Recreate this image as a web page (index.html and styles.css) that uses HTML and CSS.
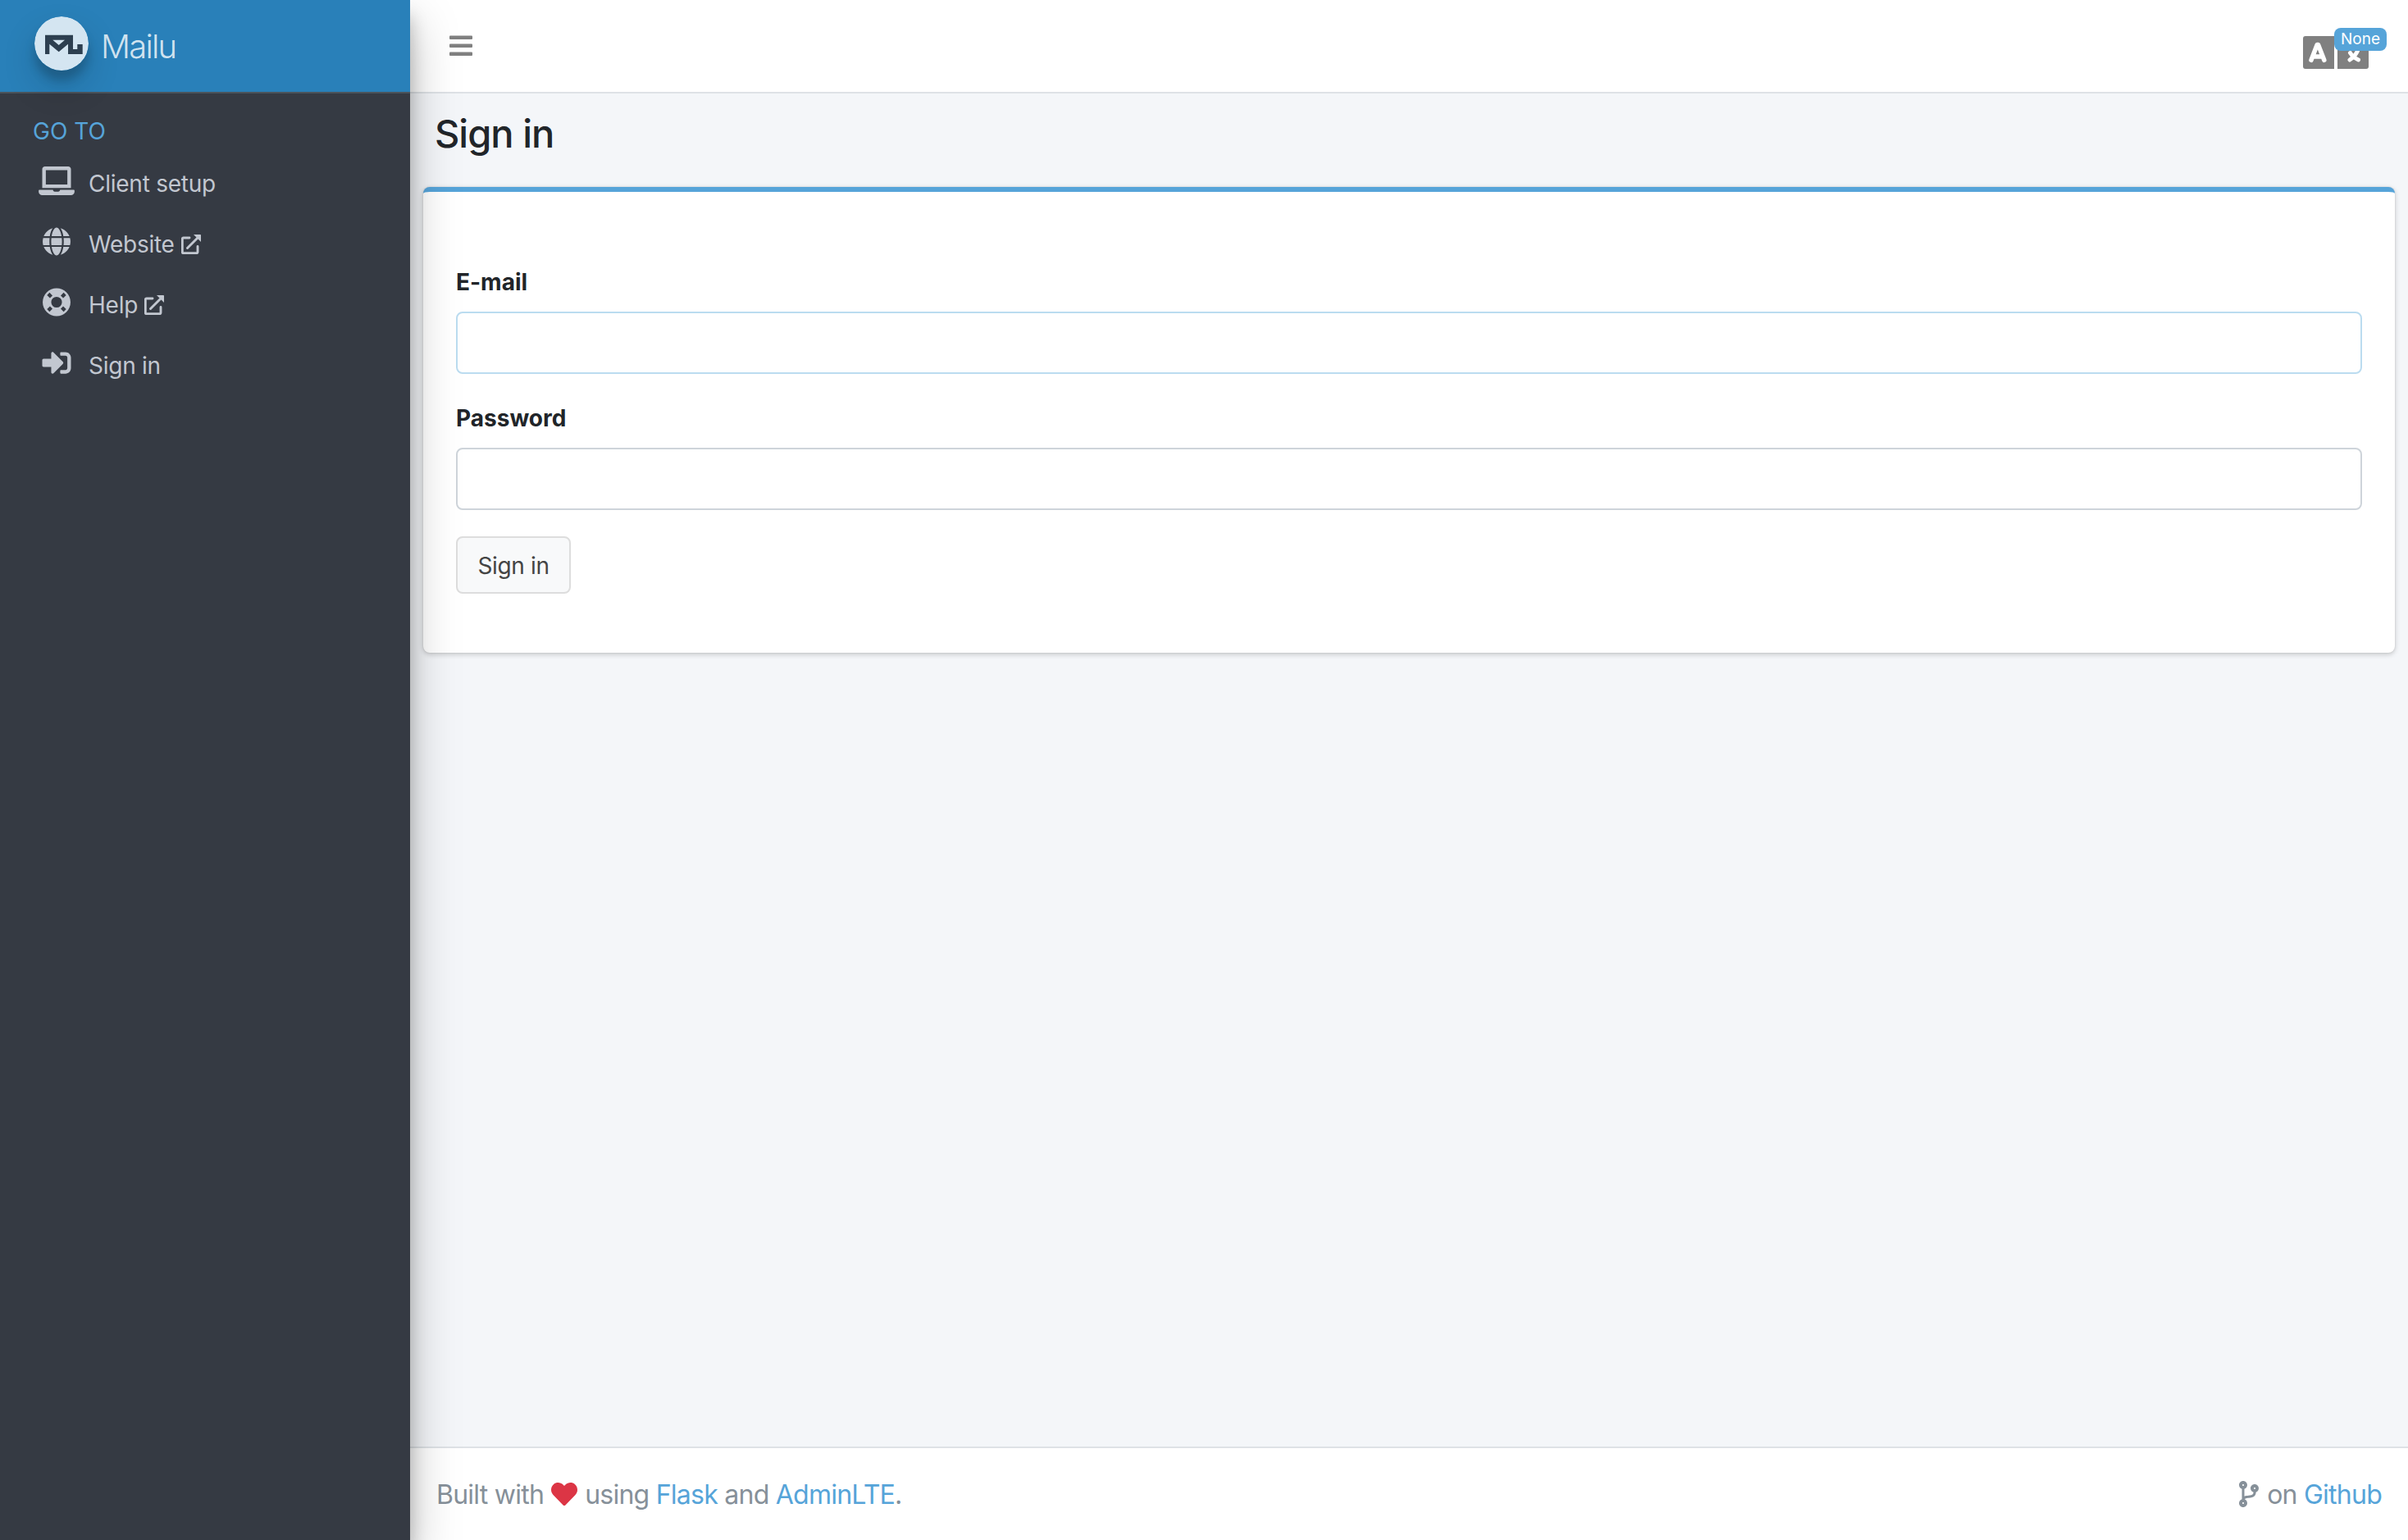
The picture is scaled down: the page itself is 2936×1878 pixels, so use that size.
FILE: index.html
```html
<!DOCTYPE html>
<html lang="en">
<head>
<meta charset="utf-8">
<title>Mailu</title>
<link rel="stylesheet" href="styles.css">
</head>
<body>
<div class="wrapper">
  <aside class="sidebar">
    <a class="brand">
      <svg class="brand-logo" viewBox="0 0 66 66"><circle cx="33" cy="33" r="33" fill="#fff"/><path fill="#2f3036" fill-rule="evenodd" d="M13 22.700H47V40H52.300V34H58.700V46H41V33.700L29.700 43.300 18.300 33.700V46H13zM22.300 28.700 29.700 35 37 28.700z"/></svg>
      <span class="brand-text">Mailu</span>
    </a>
    <nav class="nav">
      <div class="nav-header">GO TO</div>
      <a class="nav-item"><svg class="nav-icon laptop" viewBox="0 0 640 512"><path d="M624 416H381.540c-.740 19.810-14.710 32-32.740 32H288c-18.690 0-33.020-17.470-32.770-32H16c-8.800 0-16 7.200-16 16v16c0 35.200 28.800 64 64 64h512c35.200 0 64-28.800 64-64v-16c0-8.800-7.200-16-16-16zM576 48c0-26.400-21.600-48-48-48H112C85.600 0 64 21.600 64 48v336h512V48zm-64 272H128V64h384v256z"/></svg><span>Client setup</span></a>
      <a class="nav-item"><svg class="nav-icon" viewBox="0 0 496 512"><path d="M336.500 160C322 70.700 287.800 8 248 8s-74 62.700-88.500 152h177zM152 256c0 22.200 1.200 43.500 3.300 64h185.300c2.100-20.500 3.300-41.800 3.300-64s-1.200-43.500-3.300-64H155.300c-2.100 20.500-3.300 41.800-3.300 64zm324.700-96c-28.600-67.900-86.500-120.400-158-141.600 24.400 33.800 41.200 84.700 50 141.600h108zM177.200 18.400C105.800 39.600 47.800 92.100 19.300 160h108c8.700-56.900 25.500-107.800 49.900-141.600zM487.400 192H372.700c2.100 21 3.300 42.500 3.300 64s-1.200 43-3.300 64h114.600c5.500-20.500 8.600-41.800 8.600-64s-3.100-43.500-8.500-64zM120 256c0-21.500 1.200-43 3.300-64H8.600C3.200 212.500 0 233.800 0 256s3.200 43.500 8.600 64h114.600c-2-21-3.200-42.500-3.200-64zm39.500 96c14.500 89.300 48.700 152 88.500 152s74-62.700 88.500-152h-177zm159.300 141.600c71.400-21.200 129.400-73.700 158-141.600h-108c-8.800 56.900-25.600 107.800-50 141.600zM19.300 352c28.600 67.900 86.500 120.400 158 141.600-24.400-33.800-41.200-84.700-50-141.600h-108z"/></svg><span>Website</span><svg class="ext" viewBox="0 0 24 24"><path d="M10 4H2.700Q1.300 4 1.300 5.400V21.300Q1.300 22.700 2.700 22.700H18.600Q20 22.700 20 21.300V14.500M7.500 16.500 20 4" fill="none" stroke="currentColor" stroke-width="2.900" stroke-linecap="round"/><path d="M15 0h8.200q.8 0 .8.800V9z"/></svg></a>
      <a class="nav-item"><svg class="nav-icon" viewBox="0 0 512 512"><path fill-rule="evenodd" d="M256 8a248 248 0 1 0 0 496 248 248 0 0 0 0-496zm0 152a96 96 0 1 1 0 192 96 96 0 0 1 0-192zM85 130l45-45 53 53-45 45zM382 85l45 45-53 53-45-45zM427 382l-45 45-53-53 45-45zM130 427l-45-45 53-53 45 45z"/></svg><span>Help</span><svg class="ext" viewBox="0 0 24 24"><path d="M10 4H2.700Q1.300 4 1.300 5.400V21.300Q1.300 22.700 2.700 22.700H18.600Q20 22.700 20 21.300V14.500M7.500 16.500 20 4" fill="none" stroke="currentColor" stroke-width="2.900" stroke-linecap="round"/><path d="M15 0h8.200q.8 0 .8.800V9z"/></svg></a>
      <a class="nav-item"><svg class="nav-icon" viewBox="0 0 512 512"><path d="M416 448h-84c-6.600 0-12-5.400-12-12v-40c0-6.600 5.400-12 12-12h84c17.700 0 32-14.300 32-32V160c0-17.700-14.300-32-32-32h-84c-6.600 0-12-5.400-12-12V76c0-6.600 5.400-12 12-12h84c53 0 96 43 96 96v192c0 53-43 96-96 96zm-47-209L201 71c-15-15-41-4.500-41 17v96H24c-13.300 0-24 10.700-24 24v96c0 13.300 10.700 24 24 24h136v96c0 21.500 26 32 41 17l168-168c9.300-9.400 9.300-24.600 0-34z"/></svg><span>Sign in</span></a>
    </nav>
  </aside>
  <div class="main">
    <header class="topbar">
      <svg class="menu" viewBox="0 0 28 26"><rect y=".5" width="28" height="4.500" rx="1"/><rect y="10.500" width="28" height="4.500" rx="1"/><rect y="20.500" width="28" height="4.500" rx="1"/></svg>
      <div class="lang">
        <svg viewBox="0 0 80 40"><path d="M3 0H38V40H3Q0 40 0 37V3Q0 0 3 0zM42 0H77Q80 0 80 3V37Q80 40 77 40H42z"/><path fill="none" stroke="#fff" stroke-width="5.500" stroke-linecap="round" stroke-linejoin="round" d="M10 29.300 17.200 10.500H18.500L25.800 29.300M13 25H23"/><path fill="none" stroke="#fff" stroke-width="5" stroke-linecap="round" d="M52 12H70M61 9V12M68 14Q65 24 57 29M57.500 20.500Q61 26 67.500 29"/></svg>
        <span class="badge">None</span>
      </div>
    </header>
    <main class="content">
      <h1>Sign in</h1>
      <form class="card">
        <label for="email">E-mail</label>
        <input id="email" class="field active" type="text">
        <label for="pw">Password</label>
        <input id="pw" class="field" type="password">
        <button type="button">Sign in</button>
      </form>
    </main>
    <footer class="footer">
      <div class="built"><span>Built with</span><svg class="heart" viewBox="0 0 512 512"><path d="M462.300 62.600C407.500 15.900 326 24.300 275.700 76.200L256 96.500l-19.700-20.300C186.100 24.300 104.500 15.900 49.700 62.600c-62.800 53.600-66.100 149.800-9.900 207.900l193.500 199.800c12.500 12.900 32.800 12.900 45.300 0l193.500-199.800c56.300-58.100 53-154.300-9.800-207.900z"/></svg><span>using <a>Flask</a> and <a>AdminLTE</a>.</span></div>
      <div class="git"><svg class="branch" viewBox="0 0 384 512"><path d="M384 144c0-44.200-35.800-80-80-80s-80 35.800-80 80c0 36.400 24.300 67.100 57.500 76.800-.6 16.100-4.200 28.500-11 36.900-15.400 19.200-49.300 22.400-85.200 25.700-28.200 2.600-57.400 5.400-81.300 16.900v-144c32.500-10.200 56-40.500 56-76.300 0-44.200-35.800-80-80-80S0 35.800 0 80c0 35.800 23.500 66.100 56 76.300v199.300C23.500 365.900 0 396.200 0 432c0 44.200 35.800 80 80 80s80-35.800 80-80c0-34-21.200-63.100-51.200-74.600 3.100-5.200 7.800-9.800 14.900-13.400 16.200-8.200 40.400-10.400 66.100-12.800 42.200-3.900 90-8.400 118.200-43.400 14-17.400 21.100-39.800 21.600-67.900 31.600-10.800 54.400-40.700 54.400-75.900zM80 64c8.800 0 16 7.200 16 16s-7.200 16-16 16-16-7.200-16-16 7.200-16 16-16zm0 384c-8.800 0-16-7.200-16-16s7.200-16 16-16 16 7.200 16 16-7.200 16-16 16zm224-320c8.800 0 16 7.200 16 16s-7.200 16-16 16-16-7.200-16-16 7.200-16 16-16z"/></svg><span>on <a>Github</a></span></div>
    </footer>
  </div>
</div>
</body>
</html>
```
FILE: styles.css
```css
* { box-sizing: border-box; }
body { margin: 0; font-family: Inter, "Liberation Sans", sans-serif; font-size: 28px; color: #212529; background: #f4f6f9; }
svg { fill: currentColor; flex: none; display: block; }
.wrapper { display: flex; height: 1878px; overflow: hidden; }
.sidebar { width: 500px; flex: none; background: #353a43; z-index: 2; box-shadow: 0 28px 56px rgba(0,0,0,.25), 0 20px 20px rgba(0,0,0,.22); }
.brand { display: flex; height: 114px; padding: 20px 0 0 42px; background: #2980b9; border-bottom: 2px solid #4b545c; color: rgba(255,255,255,.8); }
.brand-logo { width: 66px; height: 66px; border-radius: 50%; opacity: .8; box-shadow: 0 20px 40px rgba(0,0,0,.19), 0 12px 12px rgba(0,0,0,.23); }
.brand-text { margin-left: 15px; font-size: 40px; font-weight: 350; line-height: 73px; letter-spacing: -1.8px; }
.nav { color: #c2c7d0; letter-spacing: -.25px; }
.nav-header { height: 72px; padding: 28px 0 0 40px; line-height: 36px; color: #56a4d9; letter-spacing: 0; }
.nav-item { display: flex; align-items: center; height: 74px; padding-left: 47px; }
.nav-item span { padding-top: 2px; }
.nav-icon { width: 44px; height: 35px; margin: -5px 17px 0 0; }
.ext { width: 24px; height: 24px; margin: 2px 0 0 8px; }
.main { flex: 1; display: flex; flex-direction: column; min-width: 0; }
.topbar { display: flex; justify-content: space-between; height: 114px; padding: 43px 48px 0; background: #fff; border-bottom: 2px solid #dee2e6; color: #808080; }
.menu { width: 28px; height: 26px; }
.lang { position: relative; width: 80px; height: 40px; margin-top: 1px; }
.badge { position: absolute; left: 38px; top: -10px; width: 64px; height: 28px; border-radius: 8px; background: #56a4d9; color: #fff; font-size: 19px; line-height: 27px; text-align: center; }
.content { flex: 1; padding: 20px 16px 0; }
h1 { margin: 0 0 36px 14px; font-size: 47px; font-weight: 520; line-height: 58px; letter-spacing: -1px; }
.card { height: 568px; background: #fff; border-top: 6px solid #56a4d9; border-radius: 8px; padding: 92px 40px 0; box-shadow: 0 0 2px rgba(0,0,0,.13), 0 2px 6px rgba(0,0,0,.2); }
label { display: block; font-weight: 700; line-height: 36px; margin-bottom: 18px; letter-spacing: 0; }
.field { display: block; width: 100%; height: 76px; border: 2px solid #ced4da; border-radius: 8px; margin: 0 0 36px; background: #fff; outline: none; }
.field.active { border-color: #bbdcf0; }
button { display: block; width: 140px; height: 70px; margin-top: -4px; border: 2px solid #ddd; border-radius: 8px; background: #f8f9fa; color: #444; font: inherit; letter-spacing: -.35px; padding: 2px 0 0; }
.footer { height: 114px; border-top: 2px solid #dee2e6; background: #fff; color: #869099; font-size: 32px; letter-spacing: -.75px; display: flex; justify-content: space-between; align-items: center; padding: 0 32px; }
.footer a { color: #56a4d9; }
.built, .git { display: flex; align-items: center; }
.heart { width: 32px; height: 36px; margin: 0 9px 0 9px; color: #dc3545; }
.branch { width: 24px; height: 32px; margin-right: 10px; }
```
